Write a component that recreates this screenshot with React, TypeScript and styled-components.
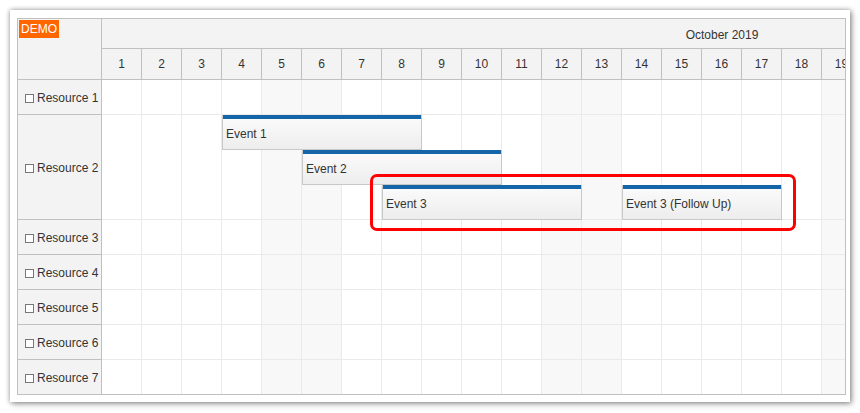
import styled, { createGlobalStyle } from "styled-components";

const GlobalStyle = createGlobalStyle`
  html, body {
    margin: 0;
    padding: 0;
    background: #fff;
  }
  body {
    font-family: "Liberation Sans", Arial, sans-serif;
    font-size: 12px;
    color: #333;
  }
`

const CELL = 40
const LANE = 35

const days = Array.from({ length: 31 }, (_, i) => i + 1)

// Oct 1 2019 was a Tuesday
const isWeekend = (d: number) => {
    const dow = (d + 1) % 7
    return dow === 0 || dow === 6
}

const resources = [
    { id: 1, name: "Resource 1", lanes: 1 },
    { id: 2, name: "Resource 2", lanes: 3 },
    { id: 3, name: "Resource 3", lanes: 1 },
    { id: 4, name: "Resource 4", lanes: 1 },
    { id: 5, name: "Resource 5", lanes: 1 },
    { id: 6, name: "Resource 6", lanes: 1 },
    { id: 7, name: "Resource 7", lanes: 1 },
]

const events = [
    { id: 1, resource: 2, start: 4, days: 5, lane: 0, text: "Event 1" },
    { id: 2, resource: 2, start: 6, days: 5, lane: 1, text: "Event 2" },
    { id: 3, resource: 2, start: 8, days: 5, lane: 2, text: "Event 3" },
    { id: 4, resource: 2, start: 14, days: 4, lane: 2, text: "Event 3 (Follow Up)" },
]

export default function App() {
    return (
        <Page>
            <GlobalStyle />
            <Card>
                <Scheduler>
                    <Corner>
                        <Demo>DEMO</Demo>
                    </Corner>
                    <TimeHeader>
                        <MonthRow>October 2019</MonthRow>
                        <DayRow>
                            {days.map(d => <DayCell key={d}>{d}</DayCell>)}
                        </DayRow>
                    </TimeHeader>
                    <RowHeaders>
                        {resources.map(r => (
                            <RowHeader key={r.id} $lanes={r.lanes}>
                                <Check />
                                {r.name}
                            </RowHeader>
                        ))}
                    </RowHeaders>
                    <Grid>
                        {resources.map(r => (
                            <GridRow key={r.id} $lanes={r.lanes}>
                                {days.map(d => <Cell key={d} $weekend={isWeekend(d)} />)}
                                {events.filter(e => e.resource === r.id).map(e => (
                                    <Event
                                        key={e.id}
                                        style={{ left: (e.start - 1) * CELL, top: e.lane * LANE, width: e.days * CELL }}
                                    >
                                        {e.text}
                                    </Event>
                                ))}
                            </GridRow>
                        ))}
                        <Highlight />
                    </Grid>
                </Scheduler>
            </Card>
        </Page>
    )
}

const Page = styled.div`
    padding: 10px;
`

const Card = styled.div`
    width: 840px;
    height: 392px;
    box-sizing: border-box;
    padding: 8px 0 0 7px;
    background: #fff;
    box-shadow: 0 0 5px rgba(0, 0, 0, 0.35), 2px 2px 6px rgba(0, 0, 0, 0.3);
`

const Scheduler = styled.div`
    width: 829px;
    height: 377px;
    box-sizing: border-box;
    border: 1px solid #c0c0c0;
    display: grid;
    grid-template-columns: 84px 743px;
    grid-template-rows: 61px 1fr;
    overflow: hidden;
`

const Corner = styled.div`
    background: #f3f3f3;
    border-right: 1px solid #c0c0c0;
    border-bottom: 1px solid #c0c0c0;
    box-sizing: border-box;
    padding: 1px;
`

const Demo = styled.div`
    display: inline-block;
    background: #ff6600;
    color: #fff;
    font-size: 12px;
    line-height: 18px;
    height: 18px;
    padding: 0 2px;
`

const TimeHeader = styled.div`
    overflow: hidden;
    background: #f3f3f3;
    border-bottom: 1px solid #c0c0c0;
    box-sizing: border-box;
`

const MonthRow = styled.div`
    width: ${31 * CELL}px;
    height: 30px;
    box-sizing: border-box;
    padding-top: 2px;
    border-bottom: 1px solid #c0c0c0;
    display: flex;
    align-items: center;
    justify-content: center;
`

const DayRow = styled.div`
    display: flex;
    width: ${31 * CELL}px;
    height: 30px;
`

const DayCell = styled.div`
    flex: 0 0 ${CELL}px;
    box-sizing: border-box;
    border-right: 1px solid #c0c0c0;
    display: flex;
    align-items: center;
    justify-content: center;
`

const RowHeaders = styled.div`
    background: #f3f3f3;
    border-right: 1px solid #c0c0c0;
    box-sizing: border-box;
`

const RowHeader = styled.div<{ $lanes: number }>`
    height: ${p => p.$lanes * LANE}px;
    box-sizing: border-box;
    border-bottom: 1px solid #c0c0c0;
    display: flex;
    align-items: center;
    padding: 2px 0 0 7px;
    white-space: nowrap;
`

const Check = styled.span`
    width: 9px;
    height: 9px;
    box-sizing: border-box;
    border: 1px solid #777;
    background: #fff;
    margin-right: 3px;
`

const Grid = styled.div`
    position: relative;
    overflow: hidden;
`

const GridRow = styled.div<{ $lanes: number }>`
    position: relative;
    display: flex;
    width: ${31 * CELL}px;
    height: ${p => p.$lanes * LANE}px;
    box-sizing: border-box;
    border-bottom: 1px solid #eaeaea;
`

const Cell = styled.div<{ $weekend: boolean }>`
    flex: 0 0 ${CELL}px;
    box-sizing: border-box;
    border-right: 1px solid #eaeaea;
    background: ${p => (p.$weekend ? "#f8f8f8" : "#fff")};
`

const Event = styled.div`
    position: absolute;
    height: ${LANE}px;
    box-sizing: border-box;
    border: 1px solid #c8c8c8;
    border-top: none;
    padding: 4px 0 0 3px;
    background: linear-gradient(to bottom, #fcfcfc, #ededed);
    display: flex;
    align-items: center;
    white-space: nowrap;
    overflow: hidden;
    &::before {
        content: "";
        position: absolute;
        top: 0;
        left: -1px;
        right: -1px;
        height: 4px;
        background: #1466a8;
    }
`

const Highlight = styled.div`
    position: absolute;
    left: 268px;
    top: 94px;
    width: 426px;
    height: 57px;
    box-sizing: border-box;
    border: 3px solid #f00;
    border-radius: 7px;
    pointer-events: none;
`
